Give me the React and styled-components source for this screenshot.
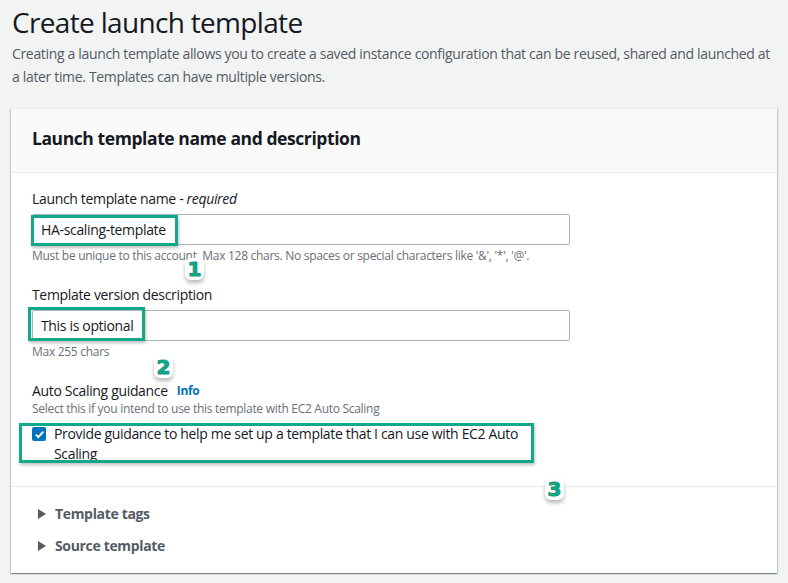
import React from "react";
import styled, { createGlobalStyle } from "styled-components";

const GlobalStyle = createGlobalStyle`
  html, body {
    margin: 0;
    padding: 0;
    background: #f2f3f3;
    font-family: "Open Sans", "Liberation Sans", Arial, sans-serif;
    color: #16191f;
  }
  * {
    box-sizing: border-box;
    letter-spacing: -0.024em;
  }
`;

const Page = styled.div`
  width: 788px;
  height: 583px;
  padding: 2px 11px 0 11px;
  overflow: hidden;
`;

const Title = styled.h1`
  margin: 0 0 0 1px;
  font-size: 28px;
  font-weight: 400;
  line-height: 40px;
  color: #16191f;
`;

const Intro = styled.p`
  margin: 0 0 0 1px;
  font-size: 14px;
  line-height: 23px;
  color: #545b64;
`;

const Card = styled.section`
  position: relative;
  margin-top: 20px;
  width: 766px;
  background: #fff;
  border-top: 1px solid #eaeded;
  box-shadow: 0 1px 1px 0 rgba(0, 28, 36, 0.3), 1px 1px 1px 0 rgba(0, 28, 36, 0.15), -1px 1px 1px 0 rgba(0, 28, 36, 0.15);
`;

const CardHeader = styled.header`
  height: 64px;
  display: flex;
  align-items: center;
  padding: 0 21px 5px 21px;
  background: #fafafa;
  border-bottom: 1px solid #eaeded;
`;

const CardTitle = styled.h2`
  margin: 0;
  font-size: 17.5px;
  font-weight: 700;
  color: #16191f;
`;

const CardBody = styled.div`
  display: flex;
  flex-direction: column;
  padding: 16px 21px 22px 21px;
  border-bottom: 1px solid #eaeded;
`;

const Field = styled.div`
  display: flex;
  flex-direction: column;
  margin-top: ${(p) => p.$gap || 0}px;
`;

const Label = styled.label`
  display: flex;
  align-items: center;
  gap: 9px;
  font-size: 14px;
  line-height: 20px;
  color: #16191f;

  em {
    font-style: italic;
  }
`;

const InfoLink = styled.span`
  font-size: 12px;
  font-weight: 700;
  color: #0073bb;
`;

const InputWrap = styled.div`
  position: relative;
  margin-top: 5px;
  width: 538px;
`;

const TextInput = styled.div`
  height: 31px;
  display: flex;
  align-items: center;
  padding: 0 8px;
  border: 1px solid #aab7b8;
  border-radius: 2px;
  font-size: 14px;
  color: #16191f;
  background: #fff;
`;

const Hint = styled.div`
  margin-top: ${(p) => p.$gap ?? 3}px;
  font-size: 12px;
  line-height: 16px;
  color: #687078;
`;

const Highlight = styled.div`
  position: absolute;
  left: ${(p) => p.$x}px;
  top: ${(p) => p.$y}px;
  width: ${(p) => p.$w}px;
  height: ${(p) => p.$h}px;
  border: 3px solid #14a88a;
  box-shadow: 1px 2px 3px rgba(0, 0, 0, 0.25);
  pointer-events: none;
`;

const CheckRow = styled.div`
  position: relative;
  display: flex;
  align-items: flex-start;
  gap: 8px;
  margin-top: 7px;
  width: 500px;
`;

const CheckBox = styled.span`
  flex: none;
  width: 14px;
  height: 14px;
  margin-top: 3px;
  border-radius: 2px;
  background: #0073bb;
  display: flex;
  align-items: center;
  justify-content: center;
`;

const CheckText = styled.span`
  font-size: 14px;
  line-height: 20px;
  color: #16191f;
`;

const Expanders = styled.div`
  display: flex;
  flex-direction: column;
  gap: 12px;
  padding: 17px 27px 17px 27px;
`;

const Expander = styled.div`
  display: flex;
  align-items: center;
  gap: 9px;
  font-size: 14px;
  font-weight: 700;
  line-height: 20px;
  color: #545b64;
`;

const Caret = styled.span`
  width: 0;
  height: 0;
  border-top: 5px solid transparent;
  border-bottom: 5px solid transparent;
  border-left: 8px solid #545b64;
`;

const Badge = styled.span`
  position: absolute;
  left: ${(p) => p.$x}px;
  top: ${(p) => p.$y}px;
  width: 19px;
  height: 22px;
  display: flex;
  align-items: center;
  justify-content: center;
  border-radius: 6px;
  background: #fff;
  box-shadow: 0 3px 4px rgba(0, 0, 0, 0.28);
  font-family: "DejaVu Sans", sans-serif;
  font-size: 20px;
  font-weight: 700;
  letter-spacing: 0;
  color: #14a88a;
  -webkit-text-stroke: 1px #129a7e;
`;

const Check = () => (
  <svg width="11" height="11" viewBox="0 0 11 11">
    <path d="M1.8 5.6 L4.4 8.1 L9.3 2.6" fill="none" stroke="#fff" strokeWidth="2" />
  </svg>
);

export default function App() {
  return (
    <>
      <GlobalStyle />
      <Page>
        <Title>Create launch template</Title>
        <Intro>
          Creating a launch template allows you to create a saved instance configuration that can be reused, shared and launched at
          a later time. Templates can have multiple versions.
        </Intro>

        <Card>
          <CardHeader>
            <CardTitle>Launch template name and description</CardTitle>
          </CardHeader>

          <CardBody>
            <Field>
              <Label>
                <span>Launch template name - <em>required</em></span>
              </Label>
              <InputWrap>
                <TextInput>HA-scaling-template</TextInput>
                <Highlight $x={-1} $y={1} $w={147} $h={31} />
              </InputWrap>
              <Hint>Must be unique to this account. Max 128 chars. No spaces or special characters like '&amp;', '*', '@'.</Hint>
            </Field>

            <Field $gap={21}>
              <Label>Template version description</Label>
              <InputWrap>
                <TextInput>This is optional</TextInput>
                <Highlight $x={-4} $y={-3} $w={117} $h={34} />
              </InputWrap>
              <Hint>Max 255 chars</Hint>
            </Field>

            <Field $gap={21}>
              <Label>
                Auto Scaling guidance <InfoLink>Info</InfoLink>
              </Label>
              <Hint $gap={0}>Select this if you intend to use this template with EC2 Auto Scaling</Hint>
              <CheckRow>
                <CheckBox>
                  <Check />
                </CheckBox>
                <CheckText>Provide guidance to help me set up a template that I can use with EC2 Auto Scaling</CheckText>
                <Highlight $x={-13} $y={-1} $w={515} $h={40} />
              </CheckRow>
            </Field>
          </CardBody>

          <Expanders>
            <Expander>
              <Caret />
              Template tags
            </Expander>
            <Expander>
              <Caret />
              Source template
            </Expander>
          </Expanders>

          <Badge $x={174} $y={149}>1</Badge>
          <Badge $x={143} $y={247}>2</Badge>
          <Badge $x={534} $y={369}>3</Badge>
        </Card>
      </Page>
    </>
  );
}
